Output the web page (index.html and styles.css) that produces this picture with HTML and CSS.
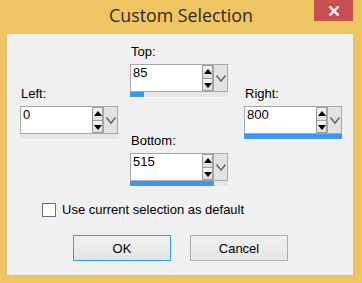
FILE: index.html
```html
<!DOCTYPE html>
<html lang="en">
<head>
    <meta charset="UTF-8">
    <title>Custom Selection</title>
    <link rel="stylesheet" href="styles.css">
</head>
<body>
    <div class="window">
        <div class="titlebar">
            <span class="title">Custom Selection</span>
            <button class="close" type="button" aria-label="Close">
                <svg width="12" height="10" viewBox="0 0 12 10">
                    <path d="M1.5 0.5 L10.5 9.5 M10.5 0.5 L1.5 9.5" stroke="#fff" stroke-width="2.4" fill="none"/>
                </svg>
            </button>
        </div>
        <div class="client">
            <div class="fields">
                <div class="col col-side">
                    <div class="field">
                        <label>Left:</label>
                        <div class="spin">
                            <div class="value">0</div>
                            <div class="arrows"><span class="up"></span><span class="down"></span></div>
                            <div class="drop"><svg width="10" height="7" viewBox="0 0 10 7"><path d="M0.5 0.5 L5 6 L9.5 0.5" stroke="#6c6c6c" stroke-width="1.6" fill="none"/></svg></div>
                        </div>
                        <div class="bar"><div class="fill" style="width: 0%"></div></div>
                    </div>
                </div>
                <div class="col col-mid">
                    <div class="field">
                        <label>Top:</label>
                        <div class="spin">
                            <div class="value">85</div>
                            <div class="arrows"><span class="up"></span><span class="down"></span></div>
                            <div class="drop"><svg width="10" height="7" viewBox="0 0 10 7"><path d="M0.5 0.5 L5 6 L9.5 0.5" stroke="#6c6c6c" stroke-width="1.6" fill="none"/></svg></div>
                        </div>
                        <div class="bar"><div class="fill" style="width: 14%"></div></div>
                    </div>
                    <div class="field field-bottom">
                        <label>Bottom:</label>
                        <div class="spin">
                            <div class="value">515</div>
                            <div class="arrows"><span class="up"></span><span class="down"></span></div>
                            <div class="drop"><svg width="10" height="7" viewBox="0 0 10 7"><path d="M0.5 0.5 L5 6 L9.5 0.5" stroke="#6c6c6c" stroke-width="1.6" fill="none"/></svg></div>
                        </div>
                        <div class="bar"><div class="fill" style="width: 86%"></div></div>
                    </div>
                </div>
                <div class="col col-side">
                    <div class="field">
                        <label>Right:</label>
                        <div class="spin">
                            <div class="value">800</div>
                            <div class="arrows"><span class="up"></span><span class="down"></span></div>
                            <div class="drop"><svg width="10" height="7" viewBox="0 0 10 7"><path d="M0.5 0.5 L5 6 L9.5 0.5" stroke="#6c6c6c" stroke-width="1.6" fill="none"/></svg></div>
                        </div>
                        <div class="bar"><div class="fill" style="width: 100%"></div></div>
                    </div>
                </div>
            </div>
            <label class="check">
                <span class="box"></span>
                Use current selection as default
            </label>
            <div class="buttons">
                <button class="btn btn-default" type="button">OK</button>
                <button class="btn" type="button">Cancel</button>
            </div>
        </div>
    </div>
</body>
</html>
```

FILE: styles.css
```css
html, body {
    margin: 0;
    padding: 0;
}
body {
    width: 362px;
    height: 283px;
    background-color: #efc563;
    font-family: "Liberation Sans", Arial, sans-serif;
    font-size: 13px;
    color: #000;
    overflow: hidden;
}
.window {
    display: flex;
    flex-direction: column;
    height: 283px;
}
.titlebar {
    height: 33px;
    display: grid;
    grid-template-columns: 1fr auto 1fr;
    align-items: start;
}
.title {
    grid-column: 2;
    font-family: "Open Sans", "Noto Sans", sans-serif;
    font-size: 17.8px;
    line-height: 30px;
    color: #2e2a22;
}
.close {
    grid-column: 3;
    justify-self: end;
    margin-right: 9px;
    width: 39px;
    height: 21px;
    border: none;
    padding: 0;
    background-color: #c75050;
    display: flex;
    align-items: center;
    justify-content: center;
}
.client {
    margin: 0 8px 7px 6px;
    height: 241px;
    border: 1px solid #d9c08a;
    background-color: #f0f0f0;
}
.fields {
    display: grid;
    grid-template-columns: 110px 114px 97px;
    padding-left: 13px;
    height: 152px;
}
.col-mid {
    padding-top: 11px;
}
.col-side {
    padding-top: 53px;
}
.field {
    width: 98px;
}
.field label {
    display: block;
    line-height: 14px;
    margin-bottom: 5px;
    padding-left: 1px;
}
.field-bottom {
    margin-top: 36px;
}
.spin {
    display: flex;
    height: 28px;
}
.value {
    flex: 1;
    background-color: #fff;
    border: 1px solid #a8a8a8;
    border-right: none;
    padding: 1px 2px;
    line-height: 14px;
}
.arrows {
    width: 11px;
    display: flex;
    flex-direction: column;
    background-color: #fff;
    border-top: 1px solid #a8a8a8;
    border-bottom: 1px solid #a8a8a8;
}
.arrows span {
    flex: 1;
    position: relative;
    background: linear-gradient(#f4f4f4, #dcdcdc);
    border: 1px solid #9c9c9c;
}
.arrows .up {
    border-bottom: none;
}
.arrows span::after {
    content: "";
    position: absolute;
    left: 1px;
    border-left: 4px solid transparent;
    border-right: 4px solid transparent;
}
.arrows .up::after {
    top: 3px;
    border-bottom: 5px solid #000;
}
.arrows .down::after {
    top: 4px;
    border-top: 5px solid #000;
}
.drop {
    width: 13px;
    background-color: #e2e2e2;
    border: 1px solid #a8a8a8;
    display: flex;
    align-items: center;
    justify-content: center;
}
.bar {
    height: 5px;
    background-color: #e6e6e6;
    border-bottom: 1px solid #f7f7f7;
}
.fill {
    height: 100%;
    background-color: #3b97f0;
}
.check {
    display: flex;
    align-items: center;
    margin: 16px 0 0 35px;
    line-height: 16px;
}
.box {
    width: 14px;
    height: 14px;
    box-sizing: border-box;
    border: 1px solid #707070;
    background-color: #fff;
    margin-right: 6px;
}
.buttons {
    display: flex;
    gap: 19px;
    margin: 17px 0 0 66px;
}
.btn {
    width: 98px;
    height: 26px;
    border: 1px solid #acacac;
    background: linear-gradient(#f0f0f0, #e5e5e5);
    font-family: "Liberation Sans", Arial, sans-serif;
    font-size: 13px;
    color: #000;
    padding: 0;
}
.btn-default {
    border-color: #3399ff;
}
```
